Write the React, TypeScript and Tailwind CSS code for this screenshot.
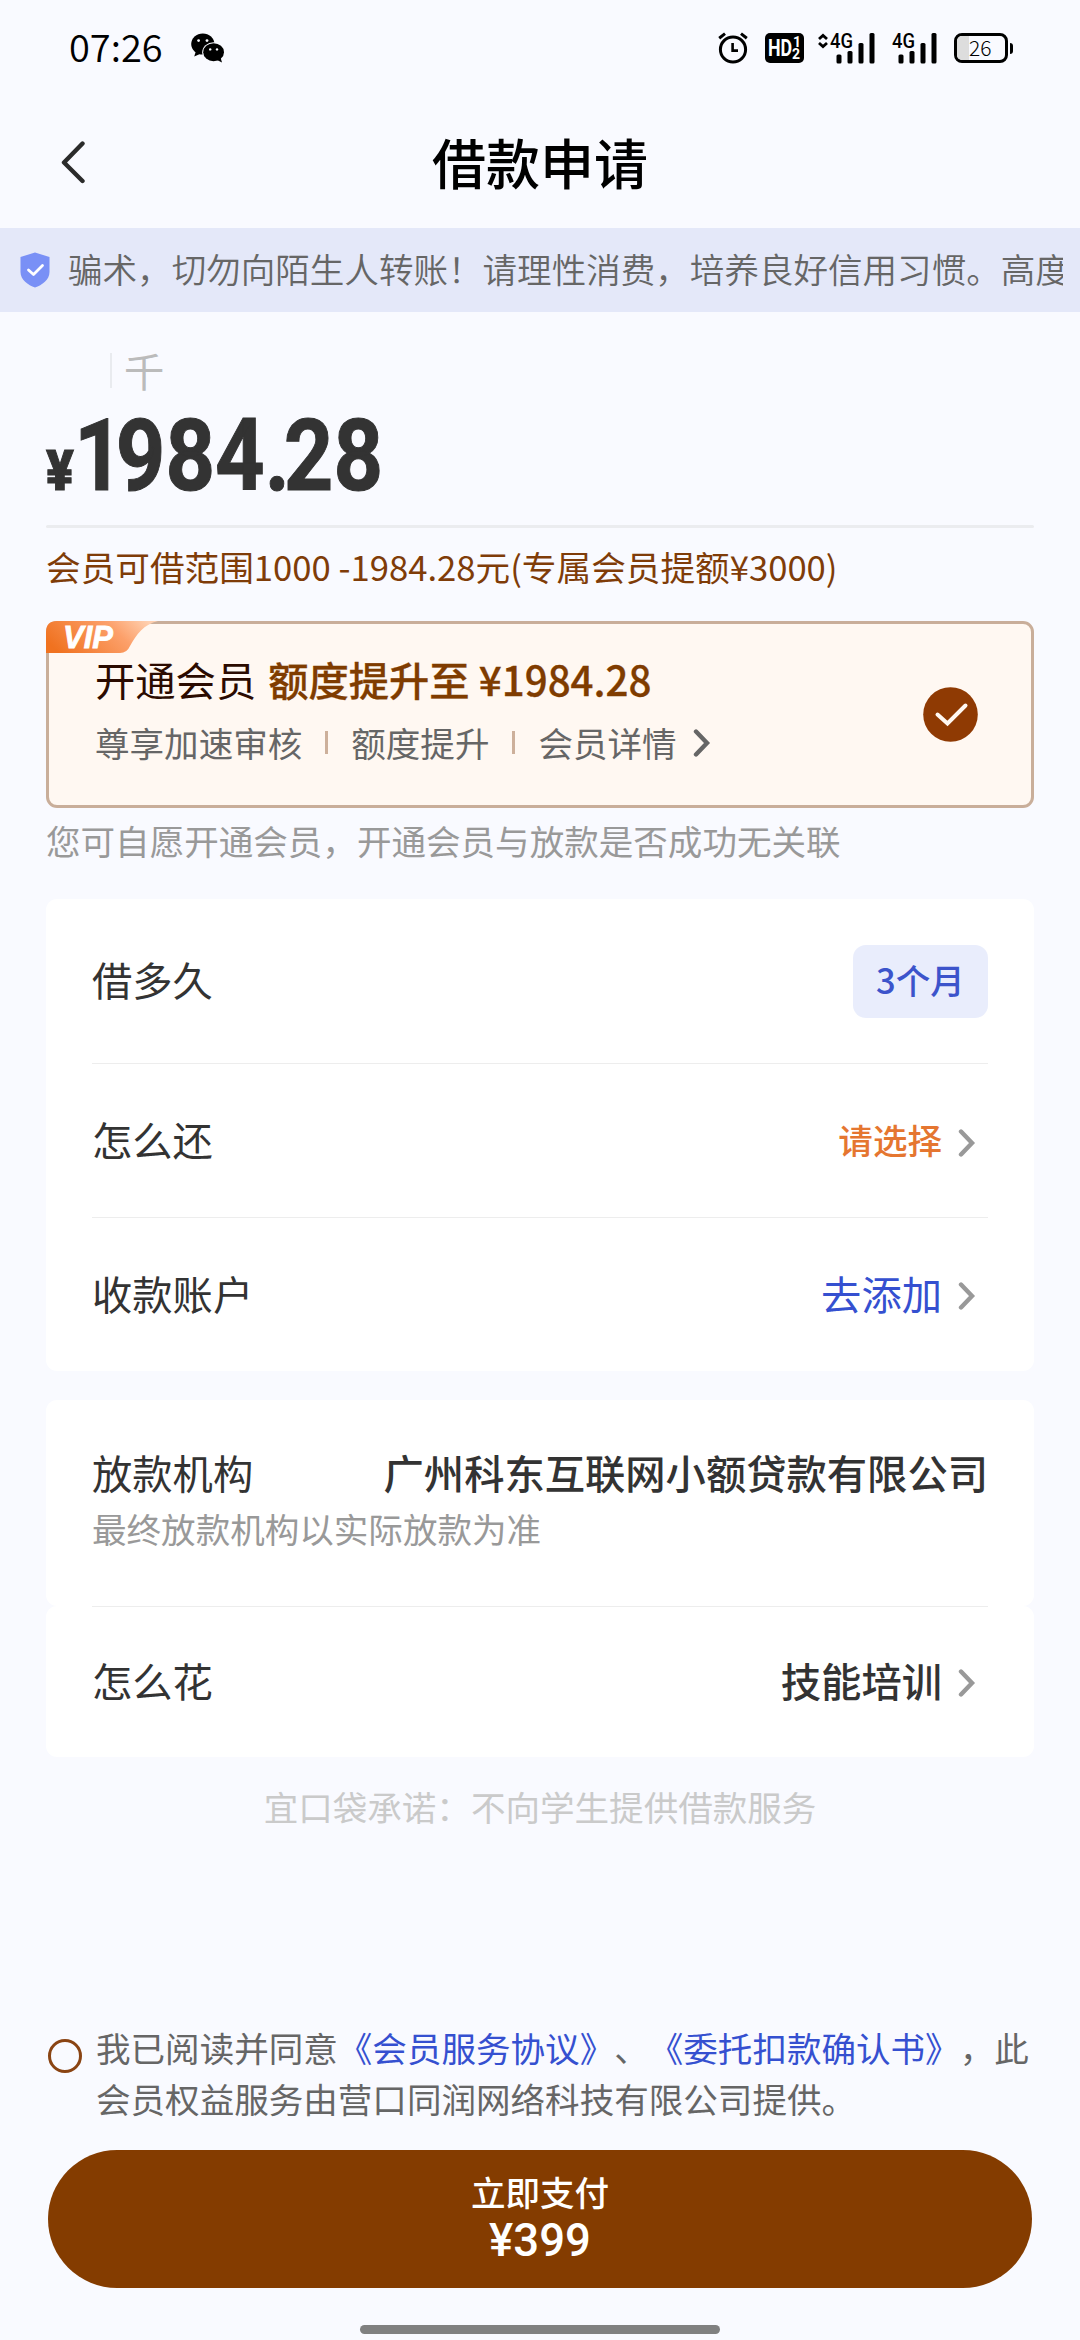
import type { ReactNode } from "react";

function Chevron({ className }: { className: string }) {
  return (
    <svg className={className} viewBox="0 0 18 30" fill="none" stroke="currentColor" strokeWidth="4.4" strokeLinecap="round" strokeLinejoin="miter">
      <path d="M3 3.5 L14 15 L3 26.5" />
    </svg>
  );
}

function Signal({ arrows }: { arrows?: boolean }) {
  return (
    <svg className={arrows ? "h-[31px] w-[57px] overflow-visible" : "h-[31px] w-[45px] overflow-visible"} viewBox={arrows ? "0 0 57 31" : "12 0 45 31"}>
      {arrows && (
        <g fill="none" stroke="#000" strokeWidth="2.8">
          <path d="M1 6 L5 2.4 L9 6" />
          <path d="M1 10 L5 13.6 L9 10" />
        </g>
      )}
      <text x="12" y="14.6" fontFamily="Roboto, sans-serif" fontSize="19.5" fontWeight="500" textLength="23" lengthAdjust="spacingAndGlyphs">4G</text>
      <rect x="18.5" y="21.5" width="5" height="9" rx="1.5" />
      <rect x="29.5" y="18" width="5" height="12.5" rx="1.5" />
      <rect x="40.5" y="10" width="5" height="20.5" rx="1.5" />
      <rect x="51.5" y="0" width="5" height="30.5" rx="1.5" />
    </svg>
  );
}

function StatusBar() {
  return (
    <header className="flex h-24 items-center justify-between pr-[67px] pl-[69px]">
      <div className="flex items-center">
        <span className="w-[96px] pb-1 text-[38px] leading-none font-[350] text-black">07:26</span>
        <svg className="ml-[26px] h-[30px] w-[34px]" viewBox="0 0 34 30">
          <path d="M5 18 L3.2 23.5 L9 21 Z" />
          <ellipse cx="11.8" cy="11" rx="11.6" ry="10.6" />
          <ellipse cx="22.6" cy="19.2" rx="11.4" ry="10" fill="#f9faff" />
          <ellipse cx="22.6" cy="19.2" rx="10.4" ry="9" />
          <path d="M26 27 L31 29.6 L29.4 24 Z" />
          <g fill="#f9faff">
            <circle cx="7.6" cy="7.6" r="1.4" />
            <circle cx="16" cy="7.6" r="1.4" />
            <circle cx="19.2" cy="16.4" r="1.2" />
            <circle cx="26" cy="16.4" r="1.2" />
          </g>
        </svg>
      </div>
      <div className="flex items-center">
        <svg className="h-[32px] w-[30px]" viewBox="0 0 30 32" fill="none" stroke="#000" strokeWidth="3">
          <circle cx="15" cy="17.5" r="12.6" />
          <path d="M1.2 6.2 L7 1.6 M28.8 6.2 L23 1.6" />
          <path d="M14.6 11 V18.6 H20" strokeWidth="2.6" />
        </svg>
        <div className="ml-[17px] flex h-[30px] w-[39px] items-center rounded-[5px] bg-black pl-[3px] font-['Roboto'] font-bold text-white">
          <span className="w-[24px] text-[24px] leading-none"><span className="inline-block origin-left scale-x-[0.74]">HD</span></span>
          <span className="flex flex-col text-[14px] leading-[12px]"><span className="pl-px">1</span><span>2</span></span>
        </div>
        <div className="ml-[14px] flex"><Signal arrows /></div>
        <div className="ml-[17px] flex"><Signal /></div>
        <div className="ml-[17px] flex h-[30px] w-[54px] overflow-hidden rounded-[8px] border-[3px] border-black">
          <div className="w-[12px] shrink-0 bg-[#dddddd]" />
          <span className="text-[21px] leading-[22px] font-light text-black">26</span>
        </div>
        <div className="ml-[2px] h-[11px] w-[3px] rounded-r-sm bg-black" />
      </div>
    </header>
  );
}

function Row({ label, height, children }: { label: string; height: string; children: ReactNode }) {
  return (
    <div className={`flex items-center justify-between ${height}`}>
      <span className="pb-[3px] text-[40.3px] leading-none text-[#333333]">{label}</span>
      <div className="flex items-center">{children}</div>
    </div>
  );
}

const chevronRow = "mt-1 ml-[16px] mr-[12px] h-[30px] w-[18px] text-[#999999]";

export default function App() {
  return (
    <div className="flex h-[2340px] w-[1080px] flex-col overflow-hidden bg-[#f9faff] font-['Noto_Sans_CJK_SC',sans-serif] whitespace-nowrap [text-spacing-trim:space-all]">
      <StatusBar />

      <nav className="grid h-[132px] grid-cols-[120px_1fr_120px] items-center">
        <svg className="ml-[60px] h-[44px] w-[26px]" viewBox="0 0 26 44" fill="none" stroke="#2b2b2b" strokeWidth="4.4" strokeLinecap="round" strokeLinejoin="round">
          <path d="M22.5 3.5 L4 22.5 L22.5 41" />
        </svg>
        <h1 className="text-center text-[54px] leading-none font-medium text-black">借款申请</h1>
      </nav>

      <div className="flex h-[84px] shrink-0 items-center bg-[#e4e8f9] pr-[17px] pl-[20px]">
        <svg className="h-[36px] w-[30px] shrink-0" viewBox="0 0 30 36" fill="none">
          <path d="M15 0.5 L29.5 5 V20 C29.5 28 22 33 15 35.5 C8 33 0.5 28 0.5 20 V5 Z" fill="#7990f6" />
          <path d="M8.5 18 L13.5 22.5 L22.5 13.5" stroke="#fff" strokeWidth="2.8" strokeLinecap="round" strokeLinejoin="round" />
        </svg>
        <p className="ml-[18px] overflow-hidden pb-[5px] text-[34.56px] leading-[50px] font-[350] text-[#666666]">
          骗术，切勿向陌生人转账！请理性消费，培养良好信用习惯。高度
        </p>
      </div>

      <main className="flex flex-col px-[46px]">
        <div className="mt-[38px] ml-[64px] flex h-10 items-center">
          <div className="h-[35px] w-[2px] bg-[#e9ebef]" />
          <span className="ml-[12px] text-[40.3px] leading-none text-[#bbbbbb]">千</span>
        </div>
        <div className="mt-[16px] flex h-[100px] items-baseline font-['Roboto'] leading-none font-bold text-[#333333]">
          <span className="inline-block w-[28px] text-[56px]"><span className="inline-block origin-left scale-x-[0.92] font-black [-webkit-text-stroke:1px_#333]">¥</span></span>
          <span className="inline-block origin-left scale-x-[0.865] text-[100px] [-webkit-text-stroke:1px_#333]">
            <span className="tracking-[-9px]">1</span>984<span className="tracking-[-7px]">.</span>28
          </span>
        </div>
        <div className="mt-[19px] h-[3px] rounded-full bg-[#ebecef]" />
        <p className="flex h-[76px] items-center text-[34.65px] leading-none text-[#7f3c08]">会员可借范围1000 -1984.28元(专属会员提额¥3000)</p>

        <section className="relative mt-[17px] flex h-[187px] items-center justify-between rounded-[11px] border-[3px] border-[#c9ae9a] bg-[#fff8f2] pr-[53px] pl-[46px]">
          <div className="absolute -top-[3px] -left-[3px] flex h-[32px] w-[112px] items-center">
            <svg className="absolute inset-0 h-full w-full" viewBox="0 0 112 32" preserveAspectRatio="none">
              <defs>
                <linearGradient id="ribbon" x1="0" y1="0.6" x2="1" y2="0.3">
                  <stop offset="0" stopColor="#f07220" />
                  <stop offset="0.65" stopColor="#fca06a" />
                  <stop offset="1" stopColor="#ffd0b0" />
                </linearGradient>
              </defs>
              <path d="M0 32 V11 Q0 0 11 0 H112 C98 3 90 14 84 25 Q81 32 74 32 Z" fill="url(#ribbon)" />
            </svg>
            <span className="relative ml-[17px] font-['Liberation_Sans'] text-[31px] leading-none font-bold text-white italic [-webkit-text-stroke:0.8px_white]">VIP</span>
          </div>
          <div className="-mt-[10px]">
            <p className="flex text-[40.3px] leading-none text-[#2b0b00]">
              开通会员<span className="ml-[12px] font-medium text-[#7f3c00] [-webkit-text-stroke:0.3px_#7f3c00]">额度提升至 ¥1984.28</span>
            </p>
            <div className="mt-[26px] flex items-center text-[34.56px] leading-none text-[#666666]">
              尊享加速审核
              <i className="mx-[23px] h-[23px] w-[3px] bg-[#cdb09b]" />
              额度提升
              <i className="mx-[23px] h-[23px] w-[3px] bg-[#cdb09b]" />
              会员详情
              <Chevron className="ml-[16px] h-[30px] w-[18px]" />
            </div>
          </div>
          <svg className="h-[55px] w-[55px]" viewBox="0 0 55 55" fill="none">
            <circle cx="27.5" cy="27.5" r="27.3" fill="#8f3a03" />
            <path d="M14.5 27.5 L24.5 36.5 L42.5 18.5" stroke="#fff8f2" strokeWidth="4" strokeLinecap="round" />
          </svg>
        </section>

        <p className="mt-[15px] text-[34.56px] leading-[34px] text-[#999999]">您可自愿开通会员，开通会员与放款是否成功无关联</p>

        <section className="mt-[42px] h-[472px] rounded-[11px] bg-white px-[46px]">
          <Row label="借多久" height="h-[164px]">
            <span className="flex h-[73px] w-[135px] items-center justify-center rounded-[13px] bg-[#e9edfc] pb-1 text-[34.56px] leading-none font-medium text-[#3c54cb]">3个月</span>
          </Row>
          <div className="h-px bg-[#ededed]" />
          <Row label="怎么还" height="h-[153px]">
            <span className="pb-[2px] text-[34.56px] leading-none font-medium text-[#e57630]">请选择</span>
            <Chevron className={chevronRow} />
          </Row>
          <div className="h-px bg-[#ededed]" />
          <Row label="收款账户" height="h-[153px]">
            <span className="pb-[2px] text-[40.3px] leading-none text-[#3550d0]">去添加</span>
            <Chevron className={chevronRow} />
          </Row>
        </section>

        <section className="mt-[29px] h-[206px] rounded-[11px] bg-white px-[46px] pt-[52px]">
          <div className="flex justify-between text-[40.3px] leading-[40px] text-[#333333]">
            <span>放款机构</span>
            <span className="font-medium">广州科东互联网小额贷款有限公司</span>
          </div>
          <p className="mt-[19px] text-[34.56px] leading-[34px] text-[#999999]">最终放款机构以实际放款为准</p>
        </section>
        <section className="h-[151px] rounded-[11px] bg-white px-[46px]">
          <div className="h-px bg-[#ededed]" />
          <Row label="怎么花" height="h-[149px]">
            <span className="pb-[3px] text-[40.3px] leading-none font-medium text-[#333333]">技能培训</span>
            <Chevron className={chevronRow} />
          </Row>
        </section>

        <p className="mt-[32px] text-center text-[34.56px] leading-[34px] text-[#cacaca]">宜口袋承诺：不向学生提供借款服务</p>
      </main>

      <footer className="mt-auto flex flex-col px-[48px] pb-[6px]">
        <div className="flex items-start">
          <div className="mt-[17px] h-[34px] w-[34px] shrink-0 rounded-full border-[3px] border-[#8a4413]" />
          <p className="ml-[14px] text-[34.56px] leading-[51px] text-[#666666]">
            我已阅读并同意<span className="text-[#3550d0]">《会员服务协议》</span>、<span className="text-[#3550d0]">《委托扣款确认书》</span>，此
            <br />
            会员权益服务由营口同润网络科技有限公司提供。
          </p>
        </div>
        <button className="mt-[26px] flex h-[138px] flex-col items-center rounded-full bg-[#843c00] pt-[24px] font-medium text-white">
          <span className="text-[34.56px] leading-[34px]">立即支付</span>
          <span className="mt-[11px] font-['Roboto'] text-[45.5px] leading-[44px]">¥399</span>
        </button>
        <div className="mt-[37px] h-[9px] w-[360px] self-center rounded-full bg-[#808080]" />
      </footer>
    </div>
  );
}
